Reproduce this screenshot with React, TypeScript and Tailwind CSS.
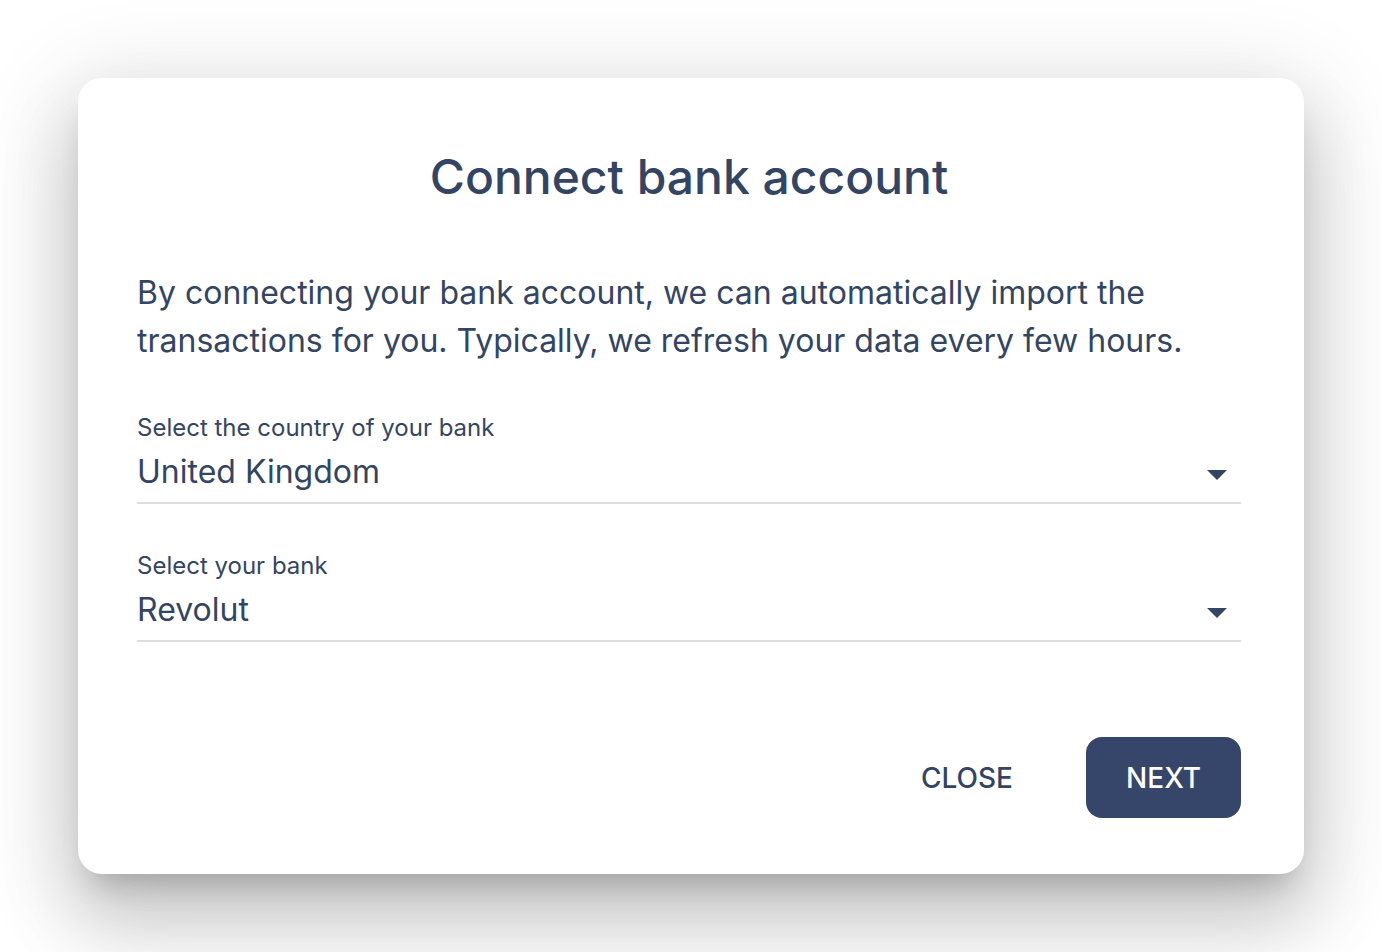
import React from 'react';

const font = { fontFamily: 'Inter, "Noto Sans", sans-serif' };

const SelectField: React.FC<{ label: string; value: string }> = ({ label, value }) => (
  <div className="flex flex-col">
    <label className="text-[24px] leading-[32px] text-[#344563]">{label}</label>
    <div className="mt-[8px] flex items-center justify-between border-b-2 border-[#dedede] pb-[10px]">
      <span className="text-[32px] leading-[40px] text-[#344563]">{value}</span>
      <svg width="20" height="10" viewBox="0 0 20 10" className="mr-[14px] mt-[6px]">
        <path d="M0 0h20L10 10z" fill="#344563" />
      </svg>
    </div>
  </div>
);

export default function App() {
  return (
    <div className="flex h-screen w-full items-center justify-center bg-white" style={font}>
      <div className="flex h-[796px] w-[1226px] flex-col rounded-[24px] bg-white pl-[59px] pr-[63px] pt-[70px] pb-[56px] shadow-[0px_22px_30px_-14px_rgba(0,0,0,0.2),0px_48px_76px_6px_rgba(0,0,0,0.14),0px_18px_92px_16px_rgba(0,0,0,0.12)]">
        <h2 className="text-center text-[48px] font-medium leading-[58px] text-[#344563]">
          Connect bank account
        </h2>
        <p className="mt-[63px] text-[32px] leading-[48px] text-[#344563]">
          By connecting your bank account, we can automatically import the transactions for you. Typically, we refresh your data every few hours.
        </p>
        <div className="mt-[47px] flex flex-col gap-[46px]">
          <SelectField label="Select the country of your bank" value="United Kingdom" />
          <SelectField label="Select your bank" value="Revolut" />
        </div>
        <div className="mt-auto flex items-center justify-end gap-[73px]">
          <button className="text-[28px] font-medium text-[#344563]">CLOSE</button>
          <button className="h-[81px] w-[155px] rounded-[16px] bg-[#36466a] text-[28px] font-medium text-white">
            NEXT
          </button>
        </div>
      </div>
    </div>
  );
}
